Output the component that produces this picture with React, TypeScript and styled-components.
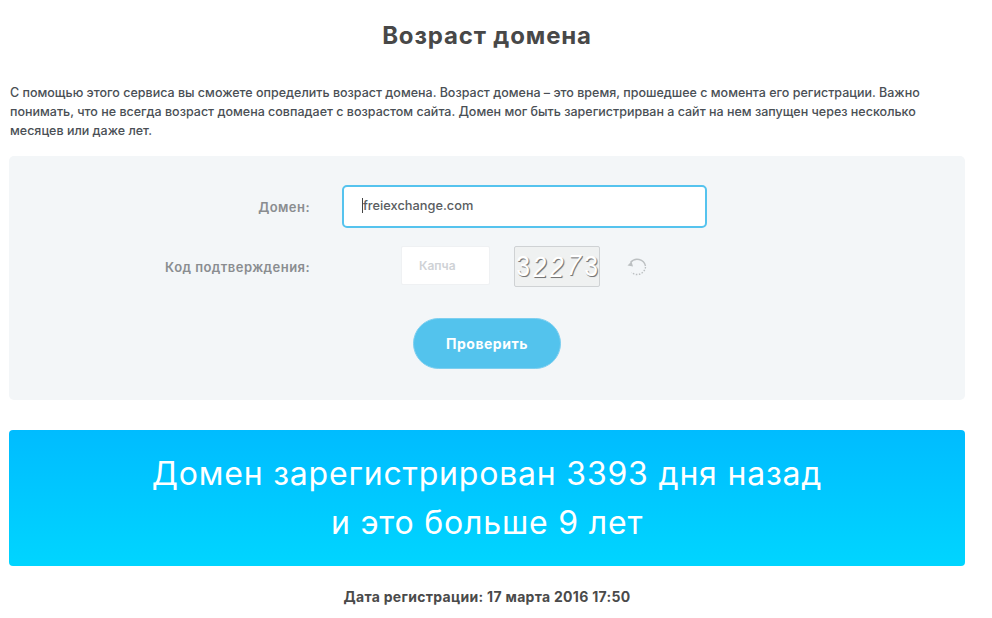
import React from "react";
import styled, { createGlobalStyle } from "styled-components";

const Global = createGlobalStyle`
  html, body { margin: 0; padding: 0; background: #fff; }
  body { font-family: Inter, "Noto Sans", "Liberation Sans", sans-serif; color: #4a4a4a; }
`;

const Page = styled.main`
  width: 956px;
  margin-left: 9px;
  display: flex;
  flex-direction: column;
`;

const Title = styled.h1`
  margin: 0;
  padding-top: 21px;
  height: 64px;
  box-sizing: border-box;
  text-align: center;
  font-size: 24px;
  line-height: 30px;
  font-weight: 700;
  letter-spacing: 0.85px;
  color: #484848;
`;

const Intro = styled.p`
  margin: 0;
  padding-left: 1px;
  padding-top: 19px;
  padding-bottom: 16px;
  font-size: 12.5px;
  line-height: 19px;
  font-weight: 500;
  color: #4a4f55;
`;

const Panel = styled.section`
  height: 244px;
  box-sizing: border-box;
  background: #f3f6f8;
  border-radius: 5px;
  padding-top: 29px;
  display: flex;
  flex-direction: column;
`;

const Row = styled.div<{ $mb: number }>`
  display: flex;
  align-items: center;
  margin-bottom: ${(p) => p.$mb}px;
`;

const Label = styled.label`
  width: 301px;
  text-align: right;
  font-size: 13px;
  font-weight: 600;
  letter-spacing: 0.45px;
  color: #8a8d90;
`;

const DomainField = styled.div`
  margin-left: 32px;
  width: 365px;
  height: 43px;
  box-sizing: border-box;
  border: 2px solid #55c3ee;
  border-radius: 5px;
  background: #fff;
  padding-left: 18px;
  padding-bottom: 2px;
  display: flex;
  align-items: center;
  font-size: 12.8px;
  font-weight: 500;
  color: #5a5d61;
`;

const Caret = styled.span`
  width: 1px;
  height: 15px;
  background: #444;
`;

const CaptchaInput = styled.div`
  margin-left: 91px;
  width: 89px;
  height: 39px;
  align-self: flex-start;
  box-sizing: border-box;
  background: #fff;
  border: 1px solid #eff1f3;
  border-radius: 2px;
  padding-left: 17px;
  display: flex;
  align-items: center;
  font-size: 12px;
  font-weight: 600;
  color: #cfd2d6;
`;

const CaptchaImage = styled.div`
  margin-left: 24px;
  width: 86px;
  height: 41px;
  box-sizing: border-box;
  border: 1px solid #cfd2d4;
  border-radius: 2px;
  background: #eff1f1;
  display: flex;
  align-items: center;
  justify-content: center;
  gap: 1px;
  font-family: "Liberation Sans", sans-serif;
  font-size: 29px;
  color: #fff;
  text-shadow: 1px 0.5px 0 #777, 1.5px 1px 1px #aaa;
  overflow: hidden;
`;

const Digit = styled.span<{ $skew: number; $lift: number }>`
  display: inline-block;
  transform: translateY(${(p) => p.$lift}px) scaleX(0.85) skewX(${(p) => p.$skew}deg);
`;

const Refresh = styled.button`
  margin-left: 24px;
  width: 26px;
  height: 26px;
  padding: 0;
  border: 0;
  background: none;
  display: flex;
  align-items: center;
  justify-content: center;
`;

const Submit = styled.button`
  align-self: center;
  margin-top: 31px;
  width: 148px;
  height: 51px;
  border: 1px solid #7dcff0;
  border-radius: 26px;
  background: #53c3ed;
  color: #fff;
  font-family: inherit;
  font-size: 14px;
  font-weight: 700;
  letter-spacing: 0.5px;
`;

const Banner = styled.section`
  margin-top: 30px;
  height: 136px;
  border-radius: 4px;
  background: linear-gradient(180deg, #00bcff 0%, #00d5ff 100%);
  color: #fff;
  text-align: center;
  font-size: 32px;
  line-height: 49px;
  font-weight: 400;
  letter-spacing: 0.8px;
  padding-top: 19px;
  box-sizing: border-box;
`;

const RegDate = styled.p`
  margin: 0;
  padding-top: 21px;
  text-align: center;
  font-size: 14px;
  line-height: 19px;
  font-weight: 700;
  letter-spacing: 0.3px;
  color: #4a4a4a;
`;

export default function App() {
  const digits: [string, number, number][] = [
    ["3", 0, 0],
    ["2", -6, 1],
    ["2", -10, 1],
    ["7", -14, -1],
    ["3", 0, 0],
  ];
  return (
    <>
      <Global />
      <Page>
        <Title>Возраст домена</Title>
        <Intro>
          С помощью этого сервиса вы сможете определить возраст домена. Возраст домена – это время, прошедшее с момента его регистрации. Важно
          <br />
          понимать, что не всегда возраст домена совпадает с возрастом сайта. Домен мог быть зарегистрирван а сайт на нем запущен через несколько
          <br />
          месяцев или даже лет.
        </Intro>
        <Panel>
          <Row $mb={18}>
            <Label>Домен:</Label>
            <DomainField>
              <Caret />
              freiexchange.com
            </DomainField>
          </Row>
          <Row $mb={0}>
            <Label>Код подтверждения:</Label>
            <CaptchaInput>Капча</CaptchaInput>
            <CaptchaImage>
              {digits.map(([d, s, l], i) => (
                <Digit key={i} $skew={s} $lift={l}>{d}</Digit>
              ))}
            </CaptchaImage>
            <Refresh aria-label="Обновить">
              <svg width="24" height="24" viewBox="0 0 24 24" fill="none" stroke="#bcc0c2" strokeWidth="1.4">
                <path d="M5.5 7.5A8.5 8.5 0 0 1 20.5 11" />
                <path d="M20.5 12A8.5 8.5 0 0 1 6.5 17.5" strokeDasharray="1.5 1.5" />
                <path d="M2.5 10.5l5.5 1-1.5-5z" fill="#bcc0c2" stroke="none" />
              </svg>
            </Refresh>
          </Row>
          <Submit>Проверить</Submit>
        </Panel>
        <Banner>
          Домен зарегистрирован 3393 дня назад
          <br />
          и это больше 9 лет
        </Banner>
        <RegDate>Дата регистрации: 17 марта 2016 17:50</RegDate>
      </Page>
    </>
  );
}
